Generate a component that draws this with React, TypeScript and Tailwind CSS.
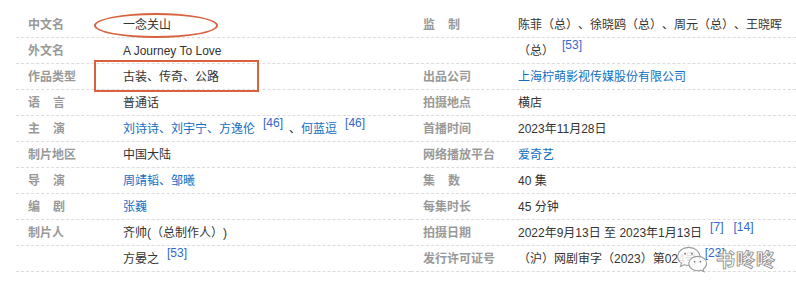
import React from "react";

type Row = {
  label?: React.ReactNode;
  value?: React.ReactNode;
};

function Sup({ n, className = "ml-2" }: { n: string; className?: string }) {
  return (
    <span className={`relative -top-[6px] text-[12px] text-[#3366cc] ${className}`}>[{n}]</span>
  );
}

function Link({ children }: { children: React.ReactNode }) {
  return <span className="text-[#136ec2]">{children}</span>;
}

function Spaced({ a, b }: { a: string; b: string }) {
  return (
    <>
      {a}
      <span className="inline-block w-[13px]" />
      {b}
    </>
  );
}

const leftRows: Row[] = [
  { label: "中文名", value: "一念关山" },
  { label: "外文名", value: "A Journey To Love" },
  { label: "作品类型", value: "古装、传奇、公路" },
  { label: <Spaced a="语" b="言" />, value: "普通话" },
  {
    label: <Spaced a="主" b="演" />,
    value: (
      <>
        <Link>刘诗诗、刘宇宁、方逸伦</Link>
        <Sup n="46" className="ml-2 mr-1.5" />
        、<Link>何蓝逗</Link>
        <Sup n="46" />
      </>
    ),
  },
  { label: "制片地区", value: "中国大陆" },
  { label: <Spaced a="导" b="演" />, value: <Link>周靖韬、邹曦</Link> },
  { label: <Spaced a="编" b="剧" />, value: <Link>张巍</Link> },
  { label: "制片人", value: "齐帅(（总制作人）)" },
  {
    value: (
      <>
        方晏之
        <Sup n="53" />
      </>
    ),
  },
];

const rightRows: Row[] = [
  { label: <Spaced a="监" b="制" />, value: "陈菲（总）、徐晓鸥（总）、周元（总）、王晓晖" },
  {
    value: (
      <>
        （总）
        <Sup n="53" />
      </>
    ),
  },
  { label: "出品公司", value: <Link>上海柠萌影视传媒股份有限公司</Link> },
  { label: "拍摄地点", value: "横店" },
  { label: "首播时间", value: "2023年11月28日" },
  { label: "网络播放平台", value: <Link>爱奇艺</Link> },
  { label: <Spaced a="集" b="数" />, value: "40 集" },
  { label: "每集时长", value: "45 分钟" },
  {
    label: "拍摄日期",
    value: (
      <>
        2022年9月13日 至 2023年1月13日
        <Sup n="7" />
        <Sup n="14" className="ml-2.5" />
      </>
    ),
  },
  {
    label: "发行许可证号",
    value: (
      <>
        （沪）网剧审字（2023）第024号
        <Sup n="23" />
      </>
    ),
  },
];

function InfoList({ rows, className }: { rows: Row[]; className: string }) {
  return (
    <div className={className}>
      {rows.map((r, i) => (
        <div
          key={i}
          className="flex h-[26px] items-center border-b border-dashed border-[#dcdcdc] leading-[26px]"
        >
          <div className="w-[107px] shrink-0 pl-3 font-bold text-[#999]">{r.label}</div>
          <div className="whitespace-nowrap text-[#333]">{r.value}</div>
        </div>
      ))}
    </div>
  );
}

function Watermark() {
  return (
    <div className="absolute left-[674px] top-[244px] flex items-center gap-1">
      <svg width="38" height="30" viewBox="0 0 36 28" fill="none">
        <path
          d="M14 3c-6 0-10.5 3.8-10.5 8.6 0 2.7 1.4 5 3.6 6.6l-.9 2.9 3.4-1.7c1.4.4 2.8.6 4.4.6 6 0 10.5-3.8 10.5-8.4S20 3 14 3z"
          fill="white"
          fillOpacity="0.85"
          stroke="#9a9a9a"
          strokeWidth="1"
        />
        <path
          d="M22.5 11.5c-4.8 0-8.5 3-8.5 6.8s3.7 6.8 8.5 6.8c1.1 0 2.1-.2 3.1-.5l2.8 1.4-.7-2.4c1.9-1.3 3.2-3.1 3.2-5.3 0-3.8-3.7-6.8-8.4-6.8z"
          fill="white"
          fillOpacity="0.85"
          stroke="#9a9a9a"
          strokeWidth="1"
        />
        <circle cx="10.5" cy="9" r="0.9" fill="#777" />
        <circle cx="17" cy="9" r="0.9" fill="#777" />
        <circle cx="19.5" cy="16.5" r="0.8" fill="#777" />
        <circle cx="25" cy="16.5" r="0.8" fill="#777" />
      </svg>
      <span className="text-[19px] font-bold tracking-[1px] text-white [-webkit-text-stroke:0.8px_#8a8a8a] [font-family:'Noto_Sans_CJK_SC',sans-serif]">
        书咚咚
      </span>
    </div>
  );
}

export default function App() {
  return (
    <div className="relative h-[294px] w-[796px] overflow-hidden bg-white text-[12px] [text-spacing-trim:space-all] [font-family:'Liberation_Sans','Noto_Sans_CJK_SC',sans-serif]">
      <div className="flex pl-4 pt-3">
        <InfoList rows={leftRows} className="w-[395px] shrink-0" />
        <InfoList rows={rightRows} className="w-[385px] shrink-0" />
      </div>

      {/* annotations drawn over the list */}
      <div className="absolute left-[94px] top-[13px] h-[25px] w-[124px] rounded-[50%] border-2 border-[#d8623e]" />
      <div className="absolute left-[94px] top-[60px] h-[32px] w-[165px] border-2 border-[#d8623e]" />

      <Watermark />
    </div>
  );
}
